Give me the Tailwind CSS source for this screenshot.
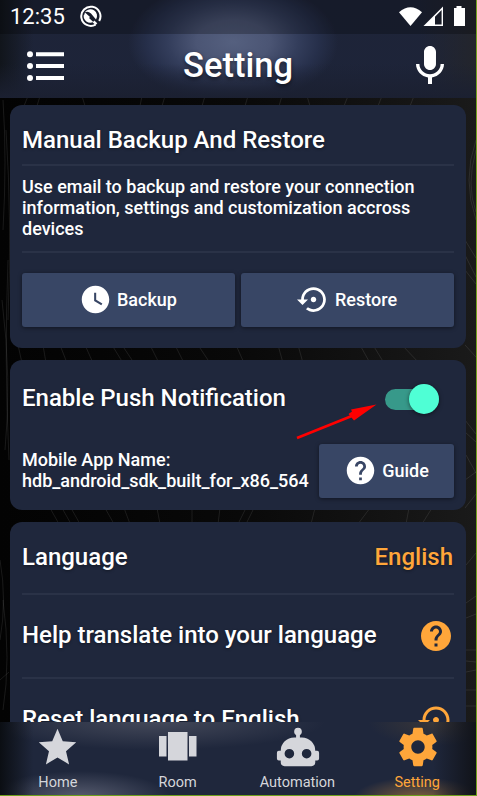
<!DOCTYPE html>
<html lang="en">
<head>
<meta charset="utf-8">
<title>Setting</title>
<script src="https://cdn.jsdelivr.net/npm/@tailwindcss/browser@4"></script>
</head>
<body class="bg-[#080808] overflow-hidden">
<div class="relative isolate w-[477px] h-[796px] overflow-hidden flex flex-col border-r border-b border-[#6f9f1c] bg-linear-to-r from-[#030303] via-[#090909] to-[#1a1a1a] font-['Roboto',sans-serif] font-medium text-white">
  <!-- fine curved strokes of the wallpaper -->
  <svg class="absolute inset-0 -z-10" width="477" height="796" fill="none" stroke="#fff" stroke-opacity=".09">
    <path d="M3 100q4 60 0 130M6 130q6 90 2 190M2 300q10 80 3 150M8 260q-4 100 1 200M18 345l4 18M43 345l3 18M60 345l7 18M85 345l8 18M112 345l11 18M122 345l12 18M150 345l9 18M175 345l9 18M198 345l12 18M236 345l8 18M278 345l5 18M298 345l5 18M360 345l10 18M373 345l11 18M402 345l17 18M50 508l9 16M62 508l9 16M71 508l9 16M105 508l9 16M124 508l6 16M157 508l3 16M192 508v16M220 508l-2 16M246 508l-8 16M254 508l-8 16M315 508l-4 16M370 508l-12 16M409 508l-3 16M432 508l-10 16M28 96l-4 10M40 96l-3 10M82 96l3 10M142 96l-2 10M165 96l-3 10M205 96l-3 10M248 96l-3 10M282 96l-3 10M307 96l3 10M348 96l-4 10M382 96l-4 10M414 96l-4 10M476 140q-14 40 0 80M476 150q-10 35 0 62M465 240l11 18M465 255l11 22M465 270l11 14M465 345l11 12M465 420l11 14M465 432l11 10M466 455l10 18M465 480l11-8M465 508l11-14M466 565l10-12M466 603l10-7M466 618l10-4M466 650h10M466 661l10 1M466 672l10-2M466 690h10M466 706h10M0 560q7 40 0 80M3 600q8 60 0 110M0 680l9-8"/>
  </svg>

  <header class="relative isolate shrink-0 h-[98px] overflow-hidden bg-linear-to-b from-[#1e2438] to-[#1d2439]">
    <div class="absolute inset-0 -z-10 bg-[radial-gradient(ellipse_105px_62px_at_233px_42px,#55607f_0%,#4b5574_35%,#333d5b_62%,#262f4a_82%,transparent_100%)]"></div>
    <div class="absolute inset-0 -z-10 bg-linear-to-r from-[#11151b] from-0% via-transparent via-7% to-transparent"></div>
    <div class="absolute inset-0 -z-10 bg-linear-to-l from-[#23252c] from-0% via-transparent via-12% to-transparent"></div>
    <div class="absolute inset-0 -z-10 bg-linear-to-t from-[#1b2031] to-transparent to-35%"></div>
    <div class="h-[34px] bg-black/25 flex items-center pl-[10px] pr-[9px] font-normal">
      <span class="text-[22px] leading-[34px] w-[69px]">12:35</span>
      <svg width="23" height="24" viewBox="0 0 23 24" fill="none" class="-mt-[2px]">
        <path d="M16.600 20.600A9.600 9.600 0 1 1 20.200 17" stroke="#fff" stroke-width="2"/>
        <path d="M17 15.500A6.600 6.600 0 0 0 5.800 8.300Q9 6.500 12 9.500zM4.800 11a6.600 6.600 0 0 0 9.500 7L9.500 13.500Q8.500 15 7.500 13.500z" fill="#fff"/>
        <path d="M6 8.500L4.800 12l3.700 3.500L11 13z" fill="#fff"/>
        <path d="M14.500 17.500l3 2.600" stroke="#fff" stroke-width="2.400"/>
      </svg>
      <svg width="68" height="22" viewBox="0 0 68 22" fill="#fff" class="ml-auto -mt-[1px]">
        <path d="M0 6.300Q11.500-3.600 23 6.300L11.500 20z"/>
        <path fill-rule="evenodd" d="M24.500 20L44 .5V20zM36 10.700V18.500h6.600V4.100z"/>
        <path d="M57.500 0h5v2H66v18H55V2h2.500z"/>
      </svg>
    </div>
    <div class="h-[64px] grid grid-cols-[1fr_auto_1fr] items-center px-[27px]">
      <svg width="38" height="30" fill="#fff">
        <circle cx="3" cy="3.200" r="3"/><circle cx="3" cy="15" r="3"/><circle cx="3" cy="27" r="3"/>
        <path d="M9 1.300h28v4H9zM9 13h28v4H9zM9 25h28v4H9z"/>
      </svg>
      <h1 class="text-[34.500px] leading-[60px] font-medium -mt-[3px] text-shadow-[0_2px_4px_rgb(0_0_0/.55)]">Setting</h1>
      <svg class="justify-self-end -mr-[5px]" width="48" height="48" viewBox="0 0 24 24" fill="#fff"><path d="M12 14c1.660 0 2.990-1.340 2.990-3L15 5c0-1.660-1.340-3-3-3S9 3.340 9 5v6c0 1.660 1.340 3 3 3zm5.300-3c0 3-2.540 5.100-5.300 5.100S6.700 14 6.700 11H5c0 3.410 2.720 6.230 6 6.720V21h2v-3.280c3.280-.48 6-3.300 6-6.720h-1.700z"/></svg>
    </div>
  </header>

  <main class="flex-1 min-h-0 overflow-hidden pt-[7px] pl-[10px] pr-[10px] flex flex-col gap-3">
    <section class="shrink-0 h-[243px] rounded-xl bg-[#1f273c] px-3 flex flex-col">
      <h2 class="h-[59px] pt-[10px] text-[24px] leading-[50px] whitespace-nowrap text-shadow-[0_1px_3px_rgb(0_0_0/.4)]">Manual Backup And Restore</h2>
      <div class="h-[2px] bg-[#2a3247] shrink-0"></div>
      <p class="h-[85px] pt-[10px] text-[18px] leading-[21px] whitespace-nowrap">Use email to backup and restore your connection<br>information, settings and customization accross<br>devices</p>
      <div class="h-[2px] bg-[#2a3247] shrink-0"></div>
      <div class="grid grid-cols-2 gap-[6px] mt-5">
        <button class="h-[54px] bg-[#384665] rounded-[3px] shadow-[0_1px_4px_rgb(0_0_0/.45)] flex items-center justify-center gap-[5px] pb-[2px] pr-[1px] text-[18px]">
          <svg width="33" height="33" viewBox="0 0 24 24" fill="#fff"><path d="M12 2C6.500 2 2 6.500 2 12s4.500 10 10 10 10-4.500 10-10S17.500 2 12 2zm4.200 14.200L11 13V7h1.500v5.200l4.500 2.700-.8 1.300z"/></svg>
          Backup
        </button>
        <button class="h-[54px] bg-[#384665] rounded-[3px] shadow-[0_1px_4px_rgb(0_0_0/.45)] flex items-center justify-center gap-[5px] pb-[2px] pr-[1px] text-[18px]">
          <svg width="33" height="33" viewBox="0 0 24 24" fill="#fff"><path d="M14 12c0-1.100-.9-2-2-2s-2 .9-2 2 .9 2 2 2 2-.9 2-2zm-2-9c-4.970 0-9 4.030-9 9H0l4 4 4-4H5c0-3.870 3.130-7 7-7s7 3.130 7 7-3.130 7-7 7c-1.510 0-2.910-.49-4.060-1.300l-1.420 1.440C8.040 20.300 9.940 21 12 21c4.970 0 9-4.030 9-9s-4.030-9-9-9z"/></svg>
          Restore
        </button>
      </div>
    </section>

    <section class="relative shrink-0 h-[150px] rounded-xl bg-[#1f273c] px-3 flex flex-col">
      <div class="h-[76px] flex items-center justify-between pr-[15px]">
        <h2 class="text-[24px] whitespace-nowrap text-shadow-[0_1px_3px_rgb(0_0_0/.4)]">Enable Push Notification</h2>
        <div class="w-[54px] h-[30px] mt-[2px] flex items-center">
          <div class="w-[54px] h-[21px] rounded-full bg-[#37998a] flex items-center justify-end">
            <div class="size-[30px] rounded-full bg-[#4fffd5] shadow-[0_1px_4px_rgb(0_0_0/.5)]"></div>
          </div>
        </div>
      </div>
      <div class="flex items-center justify-between mt-2">
        <p class="-mt-[2px] text-[18px] leading-[21px] whitespace-nowrap">Mobile App Name:<br>hdb_android_sdk_built_for_x86_564</p>
        <button class="w-[135px] h-[54px] bg-[#384665] rounded-[3px] shadow-[0_1px_4px_rgb(0_0_0/.45)] flex items-center justify-center gap-[5px] pb-[2px] text-[18px]">
          <svg width="33" height="33" viewBox="0 0 24 24" fill="#fff"><path d="M12 2C6.480 2 2 6.480 2 12s4.480 10 10 10 10-4.480 10-10S17.520 2 12 2zm1 17h-2v-2h2v2zm2.070-7.750l-.9.920C13.450 12.900 13 13.500 13 15h-2v-.5c0-1.100.45-2.100 1.170-2.830l1.240-1.260c.37-.36.59-.86.59-1.410 0-1.100-.9-2-2-2s-2 .9-2 2H8c0-2.210 1.790-4 4-4s4 1.790 4 4c0 .88-.36 1.680-.93 2.250z"/></svg>
          Guide
        </button>
      </div>
      <!-- pointer towards the switch -->
      <svg class="absolute left-[285px] top-[42px]" width="84" height="40" fill="#f00"><path d="M2 36L58 13.500" stroke="#f00" stroke-width="2.600"/><path d="M81.500 2.500L56 7.500l1 2-3.500 2.500L59 18.500z"/></svg>
    </section>

    <section class="shrink-0 h-[250px] rounded-t-xl bg-[#1f273c] px-3 text-[24px] text-shadow-[0_1px_3px_rgb(0_0_0/.4)]">
      <div class="h-[71px] flex items-center justify-between pr-[1px] pb-[2px]"><span>Language</span><span class="text-[#ffa63a]">English</span></div>
      <div class="h-[2px] bg-[#2a3247]"></div>
      <div class="h-[82px] flex items-center justify-between pb-[2px]"><span class="whitespace-nowrap">Help translate into your language</span>
        <svg class="mt-[2px]" width="36" height="36" viewBox="0 0 24 24" fill="#ffa63a"><path d="M12 2C6.480 2 2 6.480 2 12s4.480 10 10 10 10-4.480 10-10S17.520 2 12 2zm1 17h-2v-2h2v2zm2.070-7.750l-.9.920C13.450 12.900 13 13.500 13 15h-2v-.5c0-1.100.45-2.100 1.170-2.830l1.240-1.260c.37-.36.59-.86.59-1.410 0-1.100-.9-2-2-2s-2 .9-2 2H8c0-2.210 1.790-4 4-4s4 1.790 4 4c0 .88-.36 1.680-.93 2.250z"/></svg>
      </div>
      <div class="h-[2px] bg-[#2a3247]"></div>
      <div class="h-[82px] flex items-center justify-between pb-[2px]"><span class="whitespace-nowrap">Reset language to English</span>
        <svg class="mt-[2px]" width="36" height="36" viewBox="0 0 24 24" fill="#ffa63a"><path d="M14 12c0-1.100-.9-2-2-2s-2 .9-2 2 .9 2 2 2 2-.9 2-2zm-2-9c-4.970 0-9 4.030-9 9H0l4 4 4-4H5c0-3.870 3.130-7 7-7s7 3.130 7 7-3.130 7-7 7c-1.510 0-2.910-.49-4.060-1.300l-1.420 1.440C8.040 20.300 9.940 21 12 21c4.970 0 9-4.030 9-9s-4.030-9-9-9z"/></svg>
      </div>
    </section>
  </main>

  <nav class="relative isolate shrink-0 h-[73px] overflow-hidden bg-[#1f273c] text-[#d5d6db] font-normal text-[14.500px]">
    <div class="absolute inset-0 -z-10 bg-[radial-gradient(ellipse_170px_28px_at_155px_0px,#434859,transparent)]"></div>
    <div class="absolute inset-0 -z-10 bg-[radial-gradient(ellipse_90px_26px_at_80px_75px,#565b6e,transparent)]"></div>
    <div class="absolute inset-0 -z-10 bg-[radial-gradient(ellipse_65px_22px_at_418px_77px,#81603c,transparent)]"></div>
    <div class="absolute inset-0 -z-10 bg-[radial-gradient(ellipse_65px_24px_at_433px_0px,#383639,transparent)]"></div>
    <div class="absolute inset-0 -z-10 bg-linear-to-r from-[#0b0e13] from-0% via-transparent via-7% to-transparent"></div>
    <div class="absolute inset-0 -z-10 bg-linear-to-l from-[#111319] from-0% via-transparent via-9% to-transparent"></div>
    <div class="grid grid-cols-4 w-[479px] -ml-[2px] justify-items-center leading-[18px]">
      <div class="flex flex-col items-center pt-[3px]">
        <svg width="45" height="45" viewBox="0 0 24 24" fill="currentColor"><path d="M12 17.270L18.180 21l-1.640-7.030L22 9.240l-7.190-.61L12 2 9.190 8.630 2 9.240l5.460 4.730L5.820 21z"/></svg>
        <span class="mt-[4px]">Home</span>
      </div>
      <div class="flex flex-col items-center pt-[3px]">
        <svg width="45" height="45" fill="currentColor"><path d="M4 11h7.500v20.500H4zM13 7h19.500v28.500H13zM34 11h7.500v20.500H34z"/></svg>
        <span class="mt-[4px]">Room</span>
      </div>
      <div class="flex flex-col items-center pt-[2px]">
        <svg class="ml-[2px]" width="46" height="46" viewBox="0 0 24 24" fill="currentColor"><path d="M12 2a2 2 0 0 1 2 2c0 .74-.4 1.390-1 1.730V7h1a7 7 0 0 1 7 7h1a1 1 0 0 1 1 1v3a1 1 0 0 1-1 1h-1v1a2 2 0 0 1-2 2H5a2 2 0 0 1-2-2v-1H2a1 1 0 0 1-1-1v-3a1 1 0 0 1 1-1h1a7 7 0 0 1 7-7h1V5.730c-.6-.34-1-.99-1-1.730a2 2 0 0 1 2-2M7.500 13A2.500 2.500 0 0 0 5 15.500 2.500 2.500 0 0 0 7.500 18a2.500 2.500 0 0 0 2.500-2.500A2.500 2.500 0 0 0 7.500 13m9 0a2.500 2.500 0 0 0-2.500 2.500 2.500 2.500 0 0 0 2.500 2.500 2.500 2.500 0 0 0 2.500-2.500 2.500 2.500 0 0 0-2.500-2.500z"/></svg>
        <span class="mt-[4px]">Automation</span>
      </div>
      <div class="flex flex-col items-center pt-[2px] text-[#ffa63a]">
        <svg class="ml-[2px]" width="46" height="46" viewBox="0 0 24 24" fill="currentColor"><path d="M19.430 12.980c.04-.32.07-.64.07-.98s-.03-.66-.07-.98l2.110-1.650c.19-.15.24-.42.12-.64l-2-3.460c-.12-.22-.39-.3-.61-.22l-2.490 1c-.52-.4-1.080-.73-1.690-.98l-.38-2.650C14.460 2.180 14.250 2 14 2h-4c-.25 0-.46.18-.49.42l-.38 2.650c-.61.25-1.170.59-1.690.98l-2.490-1c-.23-.09-.49 0-.61.22l-2 3.460c-.13.22-.07.49.12.64l2.110 1.650c-.04.32-.07.65-.07.98s.03.66.07.98l-2.110 1.650c-.19.15-.24.42-.12.64l2 3.460c.12.22.39.3.61.22l2.490-1c.52.4 1.080.73 1.690.98l.38 2.650c.03.24.24.42.49.42h4c.25 0 .46-.18.49-.42l.38-2.650c.61-.25 1.170-.59 1.690-.98l2.490 1c.23.09.49 0 .61-.22l2-3.460c.12-.22.07-.49-.12-.64l-2.110-1.650zM12 15.500c-1.930 0-3.500-1.570-3.500-3.500s1.570-3.500 3.500-3.500 3.500 1.570 3.500 3.500-1.570 3.500-3.500 3.500z"/></svg>
        <span class="mt-[4px]">Setting</span>
      </div>
    </div>
  </nav>
</div>
</body>
</html>
